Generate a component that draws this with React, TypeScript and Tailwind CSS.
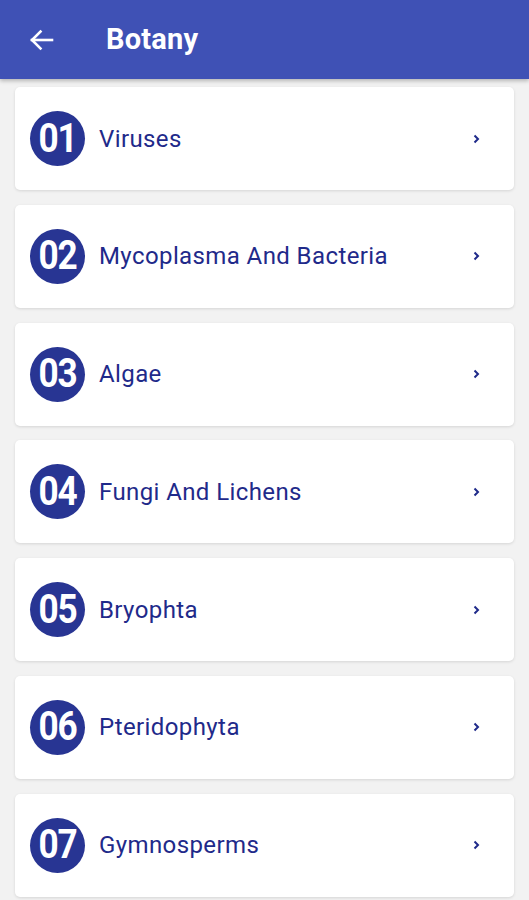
import React from 'react';

const topics = [
  { no: '01', title: 'Viruses' },
  { no: '02', title: 'Mycoplasma And Bacteria' },
  { no: '03', title: 'Algae' },
  { no: '04', title: 'Fungi And Lichens' },
  { no: '05', title: 'Bryophta' },
  { no: '06', title: 'Pteridophyta' },
  { no: '07', title: 'Gymnosperms' },
];

export default function App() {
  return (
    <div className="flex h-[900px] w-[529px] flex-col overflow-hidden bg-[#f2f2f2]" style={{ fontFamily: 'Roboto, "Liberation Sans", sans-serif' }}>
      {/* app bar */}
      <div className="flex h-[79px] shrink-0 items-center bg-[#3f51b5] shadow-[0_2px_4px_rgba(0,0,0,0.25)]">
        <div className="flex w-[106px] pl-[29px]">
          <svg width="25" height="22" viewBox="0 0 25 22" fill="none" stroke="white" strokeWidth="2.6" strokeLinecap="square">
            <path d="M23 11H3" />
            <path d="M11.5 2.5L3 11l8.5 8.5" />
          </svg>
        </div>
        <h1 className="text-[29px] font-bold tracking-[0.2px] text-white">Botany</h1>
      </div>

      {/* list */}
      <div className="flex flex-col gap-[14.8px] px-[15px] pt-[8px]">
        {topics.map((t) => (
          <div
            key={t.no}
            className="flex h-[103px] shrink-0 items-center rounded-[5px] bg-white pl-[15px] pr-[34px] shadow-[0_1px_3px_rgba(0,0,0,0.12)]"
          >
            <div className="flex h-[55px] w-[55px] shrink-0 items-center justify-center rounded-full bg-[#283593]">
              <span className="inline-block scale-x-[0.88] text-[40px] leading-none font-bold tracking-[-1.5px] text-white">
                {t.no}
              </span>
            </div>
            <span className="ml-[14px] flex-1 text-[24px] tracking-[0.4px] text-[#1f2a8a]">{t.title}</span>
            <svg width="7" height="10" viewBox="0 0 7 10" fill="none" stroke="#1f2a8a" strokeWidth="2">
              <path d="M1.5 1.5L5 5l-3.5 3.5" />
            </svg>
          </div>
        ))}
      </div>
    </div>
  );
}
